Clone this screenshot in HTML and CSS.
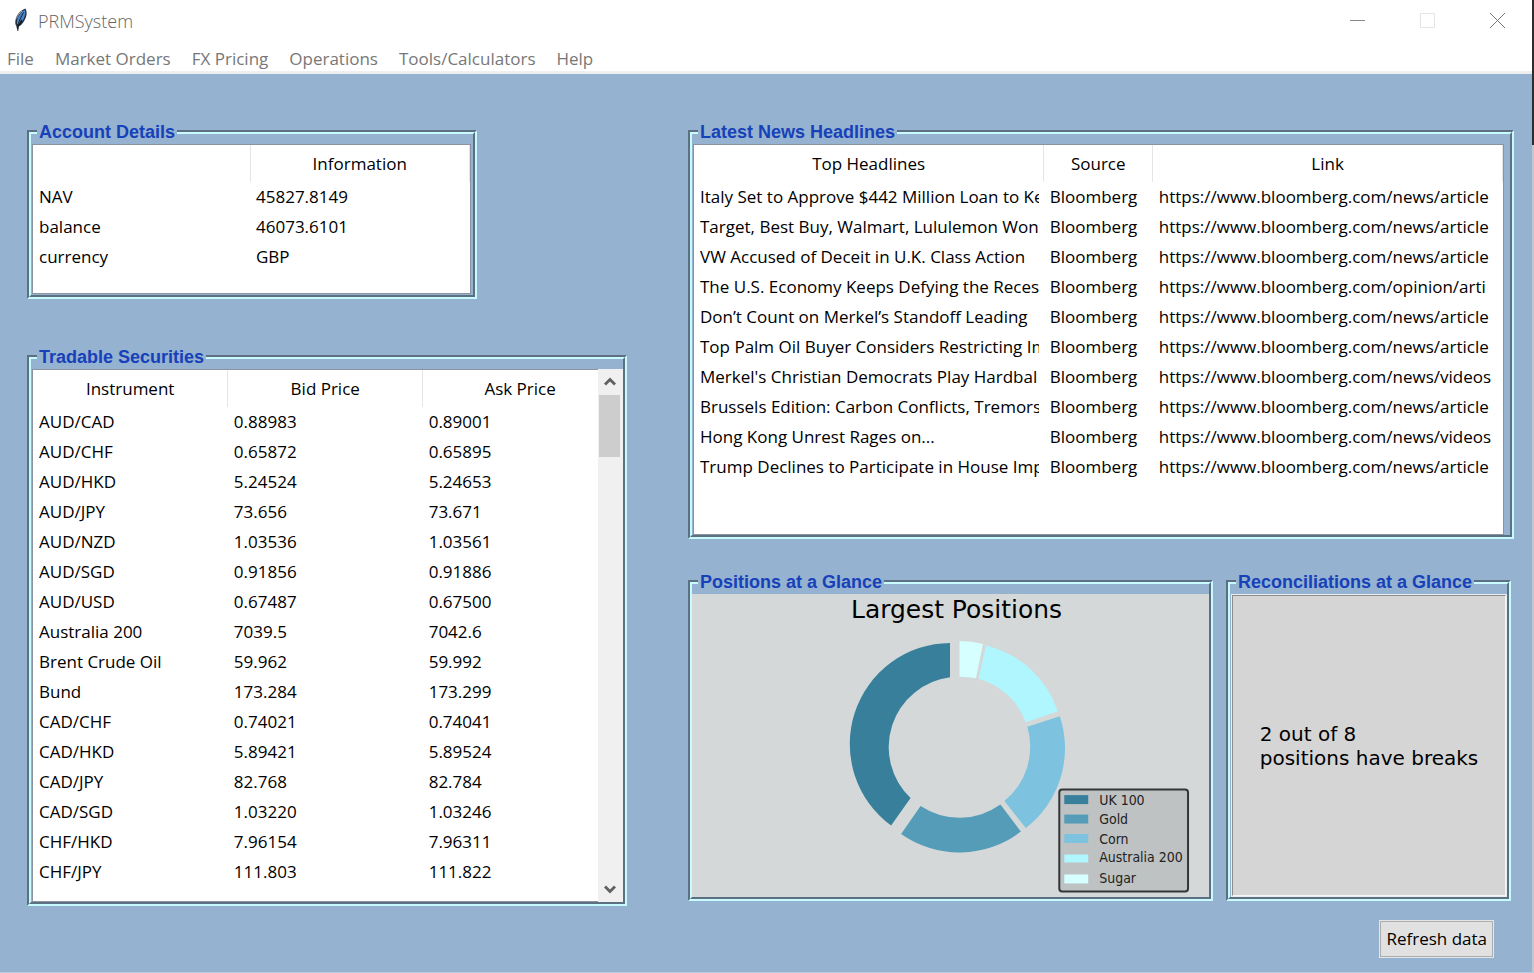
FILE: index.html
```html
<!DOCTYPE html>
<html lang="en">
<head>
<meta charset="utf-8">
<title>PRMSystem</title>
<link rel="stylesheet" href="styles.css">
</head>
<body>
<div class="window">
<header class="titlebar">
  <svg class="feather" width="16" height="24" viewBox="0 0 16 24" aria-hidden="true">
    <path d="M12.500 .5C8 2 3.500 6.500 2.500 12c-.4 2.500-.3 4.500.8 6L4.500 23h.7l.7-4.500C9 17 11.500 13 13 9c1-3 .8-6-.5-8.500z" fill="#27313c"/>
    <path d="M11.800 2C8 4 5 8 4 13v3l2 .5c3-2 4.500-5 5.500-8C12.500 6 12.500 4 11.800 2z" fill="#4a86cc"/>
    <path d="M10.500 4.500C8 9 5.500 13 4.700 21" stroke="#141b22" fill="none"/>
    <path d="M3.500 10.500c1-3 3-5.500 5.500-7.500" stroke="#a9b4bf" fill="none"/>
    <path d="M9 12l-3 5" stroke="#141b22" stroke-width="1.500" fill="none"/>
  </svg>
  <h1 class="app-name">PRMSystem</h1>
  <div class="controls">
    <button class="control" aria-label="Minimize"><svg width="15" height="15" viewBox="0 0 15 15"><path d="M0 7.500h15" stroke="#888" fill="none"/></svg></button>
    <button class="control" aria-label="Maximize" disabled><svg width="15" height="15" viewBox="0 0 15 15"><path d="M.5.5h14v14H.5z" stroke="#e4e4e4" fill="none"/></svg></button>
    <button class="control" aria-label="Close"><svg width="15" height="15" viewBox="0 0 15 15"><path d="M0 0l15 15M15 0L0 15" stroke="#777" fill="none"/></svg></button>
  </div>
</header>
<nav class="menubar">
  <button class="menu">File</button>
  <button class="menu">Market Orders</button>
  <button class="menu">FX Pricing</button>
  <button class="menu">Operations</button>
  <button class="menu">Tools/Calculators</button>
  <button class="menu">Help</button>
</nav>
<main class="dashboard">
  <div class="column left">
    <section class="group account">
      <h2 class="legend">Account Details</h2>
      <div class="body">
        <div class="tree">
          <table class="grid">
            <colgroup><col class="c-key"><col></colgroup>
            <thead><tr><th></th><th>Information</th></tr></thead>
            <tbody>
              <tr><td>NAV</td><td>45827.8149</td></tr>
              <tr><td>balance</td><td>46073.6101</td></tr>
              <tr><td>currency</td><td>GBP</td></tr>
            </tbody>
          </table>
        </div>
      </div>
    </section>
    <section class="group securities">
      <h2 class="legend">Tradable Securities</h2>
      <div class="body">
        <div class="tree">
          <table class="grid">
            <thead><tr><th>Instrument</th><th>Bid Price</th><th>Ask Price</th></tr></thead>
            <tbody>
              <tr><td>AUD/CAD</td><td>0.88983</td><td>0.89001</td></tr>
              <tr><td>AUD/CHF</td><td>0.65872</td><td>0.65895</td></tr>
              <tr><td>AUD/HKD</td><td>5.24524</td><td>5.24653</td></tr>
              <tr><td>AUD/JPY</td><td>73.656</td><td>73.671</td></tr>
              <tr><td>AUD/NZD</td><td>1.03536</td><td>1.03561</td></tr>
              <tr><td>AUD/SGD</td><td>0.91856</td><td>0.91886</td></tr>
              <tr><td>AUD/USD</td><td>0.67487</td><td>0.67500</td></tr>
              <tr><td>Australia 200</td><td>7039.5</td><td>7042.6</td></tr>
              <tr><td>Brent Crude Oil</td><td>59.962</td><td>59.992</td></tr>
              <tr><td>Bund</td><td>173.284</td><td>173.299</td></tr>
              <tr><td>CAD/CHF</td><td>0.74021</td><td>0.74041</td></tr>
              <tr><td>CAD/HKD</td><td>5.89421</td><td>5.89524</td></tr>
              <tr><td>CAD/JPY</td><td>82.768</td><td>82.784</td></tr>
              <tr><td>CAD/SGD</td><td>1.03220</td><td>1.03246</td></tr>
              <tr><td>CHF/HKD</td><td>7.96154</td><td>7.96311</td></tr>
              <tr><td>CHF/JPY</td><td>111.803</td><td>111.822</td></tr>
            </tbody>
          </table>
        </div>
        <div class="scrollbar">
          <button class="arrow" aria-label="Scroll up"><svg width="12" height="10" viewBox="0 0 12 10"><path d="M1 7.500l5-5 5 5" stroke="#606060" stroke-width="2.800" fill="none"/></svg></button>
          <div class="thumb"></div>
          <button class="arrow down" aria-label="Scroll down"><svg width="12" height="10" viewBox="0 0 12 10"><path d="M1 2.500l5 5 5-5" stroke="#606060" stroke-width="2.800" fill="none"/></svg></button>
        </div>
      </div>
    </section>
  </div>
  <div class="column right">
    <section class="group news">
      <h2 class="legend">Latest News Headlines</h2>
      <div class="body">
        <div class="tree">
          <table class="grid">
            <colgroup><col><col class="c-source"><col></colgroup>
            <thead><tr><th>Top Headlines</th><th>Source</th><th>Link</th></tr></thead>
            <tbody>
              <tr><td><span class="clip">Italy Set to Approve $442 Million Loan to Ke</span></td><td>Bloomberg</td><td><a class="clip" href="#">https://www.bloomberg.com/news/article</a></td></tr>
              <tr><td><span class="clip">Target, Best Buy, Walmart, Lululemon Won</span></td><td>Bloomberg</td><td><a class="clip" href="#">https://www.bloomberg.com/news/article</a></td></tr>
              <tr><td><span class="clip">VW Accused of Deceit in U.K. Class Action</span></td><td>Bloomberg</td><td><a class="clip" href="#">https://www.bloomberg.com/news/article</a></td></tr>
              <tr><td><span class="clip">The U.S. Economy Keeps Defying the Reces</span></td><td>Bloomberg</td><td><a class="clip" href="#">https://www.bloomberg.com/opinion/arti</a></td></tr>
              <tr><td><span class="clip">Don’t Count on Merkel’s Standoff Leading</span></td><td>Bloomberg</td><td><a class="clip" href="#">https://www.bloomberg.com/news/article</a></td></tr>
              <tr><td><span class="clip">Top Palm Oil Buyer Considers Restricting Im</span></td><td>Bloomberg</td><td><a class="clip" href="#">https://www.bloomberg.com/news/article</a></td></tr>
              <tr><td><span class="clip">Merkel's Christian Democrats Play Hardbal</span></td><td>Bloomberg</td><td><a class="clip" href="#">https://www.bloomberg.com/news/videos</a></td></tr>
              <tr><td><span class="clip">Brussels Edition: Carbon Conflicts, Tremors</span></td><td>Bloomberg</td><td><a class="clip" href="#">https://www.bloomberg.com/news/article</a></td></tr>
              <tr><td><span class="clip">Hong Kong Unrest Rages on...</span></td><td>Bloomberg</td><td><a class="clip" href="#">https://www.bloomberg.com/news/videos</a></td></tr>
              <tr><td><span class="clip">Trump Declines to Participate in House Imp</span></td><td>Bloomberg</td><td><a class="clip" href="#">https://www.bloomberg.com/news/article</a></td></tr>
            </tbody>
          </table>
        </div>
      </div>
    </section>
    <div class="glance">
      <section class="group positions">
        <h2 class="legend">Positions at a Glance</h2>
        <div class="body">
          <svg class="chart" viewBox="692 594 518 304" role="img" aria-label="Largest Positions">
            <text x="957" y="618" font-size="25" text-anchor="middle">Largest Positions</text>
            <path fill="#377f9b" d="M950.500 643A101.300 101.300 0 0 0 891.500 826L911 798.500A70.500 70.500 0 0 1 950.500 677.500z"/>
            <path fill="#559cb9" d="M901.500 834.500A101 101 0 0 0 1021.500 832L1001 805A70.500 70.500 0 0 1 921 806.500z"/>
            <path fill="#7dc3e0" d="M1026.500 828.500A101 101 0 0 0 1060.500 716.500L1028 727A70.500 70.500 0 0 1 1005 801.500z"/>
            <path fill="#aff6ff" d="M1058.500 711.500A101 101 0 0 0 986.500 645.500L979 679A70.500 70.500 0 0 1 1026.500 722.500z"/>
            <path fill="#d6ffff" d="M983.500 644A101 101 0 0 0 960 641V677A70.500 70.500 0 0 1 976.500 678.500z"/>
            <rect x="1060" y="790" width="129" height="102" rx="3" fill="#bec2c3" stroke="#333638" stroke-width="2"/>
            <path fill="#377f9b" d="M1065 795.500h24v9h-24z"/>
            <path fill="#559cb9" d="M1065 815h24v9h-24z"/>
            <path fill="#7dc3e0" d="M1065 834.500h24v9h-24z"/>
            <path fill="#aff6ff" d="M1065 855h24v8h-24z"/>
            <path fill="#d6ffff" d="M1065 875h24v9h-24z"/>
            <g class="key">
              <text x="1100" y="805">UK 100</text>
              <text x="1100" y="824">Gold</text>
              <text x="1100" y="844">Corn</text>
              <text x="1100" y="863">Australia 200</text>
              <text x="1100" y="884">Sugar</text>
            </g>
          </svg>
        </div>
      </section>
      <section class="group recon">
        <h2 class="legend">Reconciliations at a Glance</h2>
        <div class="body">
          <p class="message">2 out of 8<br>positions have breaks</p>
        </div>
      </section>
    </div>
    <button class="refresh">Refresh data</button>
  </div>
</main>
</div>
</body>
</html>
```

FILE: styles.css
```css
* { box-sizing: border-box; }

body {
  margin: 0;
  background: #95b2d0;
  color: #000;
  font: 17px/24px "Open Sans", "Noto Sans", sans-serif;
}

button {
  font: inherit;
  color: inherit;
  background: none;
  border: 0;
  padding: 0;
}

.window {
  min-height: 100vh;
  padding-right: 2px;
  background: linear-gradient(#2c2c2c 145px, #c4c8cc 145px) right / 2px 100% no-repeat;
  border-bottom: 1px solid #b4cbe0;
}

.titlebar {
  display: flex;
  align-items: center;
  height: 42px;
  padding-left: 13px;
  background: #fff;
}

.feather { margin-bottom: 2px; }

.app-name {
  flex: 1;
  margin: 0 0 0 9px;
  font-size: 18px;
  font-weight: 300;
  color: #666;
}

.controls {
  display: flex;
  align-self: flex-start;
}

.control {
  display: flex;
  align-items: center;
  justify-content: center;
  width: 70px;
  height: 40px;
}

.menubar {
  display: flex;
  gap: 21px;
  height: 32px;
  padding: 5px 7px 0;
  background: #fff;
  border-bottom: 3px solid #efefef;
  color: #777;
}

.menu { height: 24px; }

.dashboard {
  display: grid;
  grid-template-columns: 600fr 826fr;
  gap: 61px;
  padding: 56px 18px 14px 27px;
}

.column {
  display: flex;
  flex-direction: column;
  min-width: 0;
}

.left { gap: 56px; }

.group {
  position: relative;
  min-width: 0;
  border: 2px solid;
  border-color: #5c7082 #c8fbff #c8fbff #5c7082;
}

.legend {
  position: absolute;
  top: -10px;
  left: 8px;
  margin: 0;
  padding: 0 2px;
  background: #95b2d0;
  color: #1741b8;
  font: bold 18px/20px "Liberation Sans", Arial, sans-serif;
  white-space: nowrap;
}

.body {
  display: flex;
  height: 100%;
  padding: 10px 0 0 1px;
  border: 2px solid;
  border-color: #c8fbff #5c7082 #5c7082 #c8fbff;
}

.tree {
  flex: 1;
  min-width: 0;
  overflow: hidden;
  background: #fff;
  border: 1px solid #8b93a0;
}

.account { width: 75%; }
.account .body { padding-right: 2px; padding-bottom: 1px; }
.account .tree { height: 150px; }
.securities .tree { height: 533px; border-right: 0; }
.securities .grid { width: 585px; }
.news .body { padding-right: 6px; }
.news .tree { height: 391px; }

.grid {
  width: 100%;
  table-layout: fixed;
  border-collapse: collapse;
}

.grid th {
  height: 37px;
  padding: 0;
  font-weight: 400;
  border-right: 1px solid #e5e5e5;
}

.grid td {
  height: 30px;
  padding: 0 5px 0 6px;
  white-space: nowrap;
}

.c-key { width: 217px; }
.c-source { width: 109px; }

.clip {
  display: block;
  overflow: hidden;
  color: inherit;
  text-decoration: none;
}

.scrollbar {
  display: flex;
  flex-direction: column;
  width: 25px;
  padding: 0 3px 0 1px;
  background: #f0f0f0;
}

.arrow {
  display: flex;
  align-items: center;
  justify-content: center;
  height: 26px;
}

.down { margin-top: auto; }

.thumb {
  height: 62px;
  background: #cdcdcd;
}

.glance {
  display: grid;
  grid-template-columns: 525fr 285fr;
  gap: 13px;
  margin-top: 41px;
  padding-right: 3px;
}

.positions .body { padding-left: 0; }

.chart {
  display: block;
  width: 100%;
  background: #d4d8d9;
  font-family: "DejaVu Sans", sans-serif;
}

.key {
  font-family: "DejaVu Sans Condensed", "DejaVu Sans", sans-serif;
  font-size: 14px;
  fill: #222;
}

.message {
  display: flex;
  flex: 1;
  align-items: center;
  justify-content: center;
  margin: 0;
  background: #d5d5d5;
  border: 2px solid;
  border-color: #8c8c8c #f4f4f4 #f4f4f4 #8c8c8c;
  outline: 1px solid #e8eef2;
  outline-offset: -1px;
  font: 20px/24px "DejaVu Sans", sans-serif;
}

.refresh {
  align-self: flex-end;
  height: 38px;
  margin: 19px 20px 0 0;
  padding: 0 5px;
  background: #e1e1e1;
  border: 2px solid #adadad;
  outline: 1px solid #e4e6e8;
  outline-offset: -1px;
}
```
